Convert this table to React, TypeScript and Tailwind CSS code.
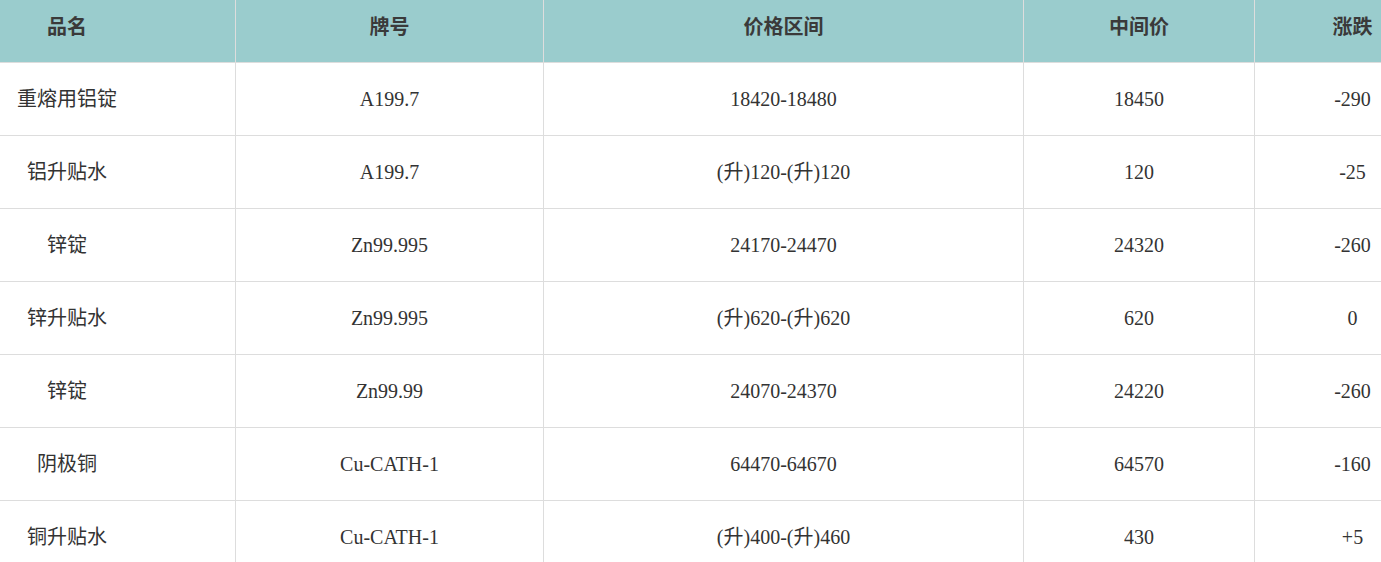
const rows = [
  { name: '重熔用铝锭', grade: 'A199.7', range: '18420-18480', mid: '18450', change: '-290' },
  { name: '铝升贴水', grade: 'A199.7', range: '(升)120-(升)120', mid: '120', change: '-25' },
  { name: '锌锭', grade: 'Zn99.995', range: '24170-24470', mid: '24320', change: '-260' },
  { name: '锌升贴水', grade: 'Zn99.995', range: '(升)620-(升)620', mid: '620', change: '0' },
  { name: '锌锭', grade: 'Zn99.99', range: '24070-24370', mid: '24220', change: '-260' },
  { name: '阴极铜', grade: 'Cu-CATH-1', range: '64470-64670', mid: '64570', change: '-160' },
  { name: '铜升贴水', grade: 'Cu-CATH-1', range: '(升)400-(升)460', mid: '430', change: '+5' },
]

const cols = 'grid grid-cols-[235px_308px_480px_231px_1fr]'
const head = { fontFamily: '"Noto Sans Mono CJK SC", "Noto Sans CJK SC", sans-serif' }
const body = { fontFamily: '"Liberation Serif", "Noto Sans CJK SC", serif' }

export default function App() {
  return (
    <div className="h-screen w-full overflow-hidden bg-white text-[20px] text-[#333]">
      {/* header */}
      <div className={`${cols} h-[63px] border-b border-[#dddddd] bg-[#9acccd] font-bold text-[#3a3a3a]`} style={head}>
        <div className="flex items-center justify-center pb-[11px] pr-[101px]">品名</div>
        <div className="flex items-center justify-center border-l border-[#dddddd] pb-[11px]">牌号</div>
        <div className="flex items-center justify-center border-l border-[#dddddd] pb-[11px]">价格区间</div>
        <div className="flex items-center justify-center border-l border-[#dddddd] pb-[11px]">中间价</div>
        <div className="flex items-center justify-center border-l border-[#dddddd] pb-[11px] pl-[69px]">涨跌</div>
      </div>

      {rows.map((r, i) => (
        <div key={i} className={`${cols} h-[73px] border-b border-[#dddddd]`} style={body}>
          <div className="flex items-center justify-center pr-[101px]">{r.name}</div>
          <div className="flex items-center justify-center border-l border-[#dddddd]">{r.grade}</div>
          <div className="flex items-center justify-center border-l border-[#dddddd]">{r.range}</div>
          <div className="flex items-center justify-center border-l border-[#dddddd]">{r.mid}</div>
          <div className="flex items-center justify-center border-l border-[#dddddd] pl-[69px]">{r.change}</div>
        </div>
      ))}
    </div>
  )
}
